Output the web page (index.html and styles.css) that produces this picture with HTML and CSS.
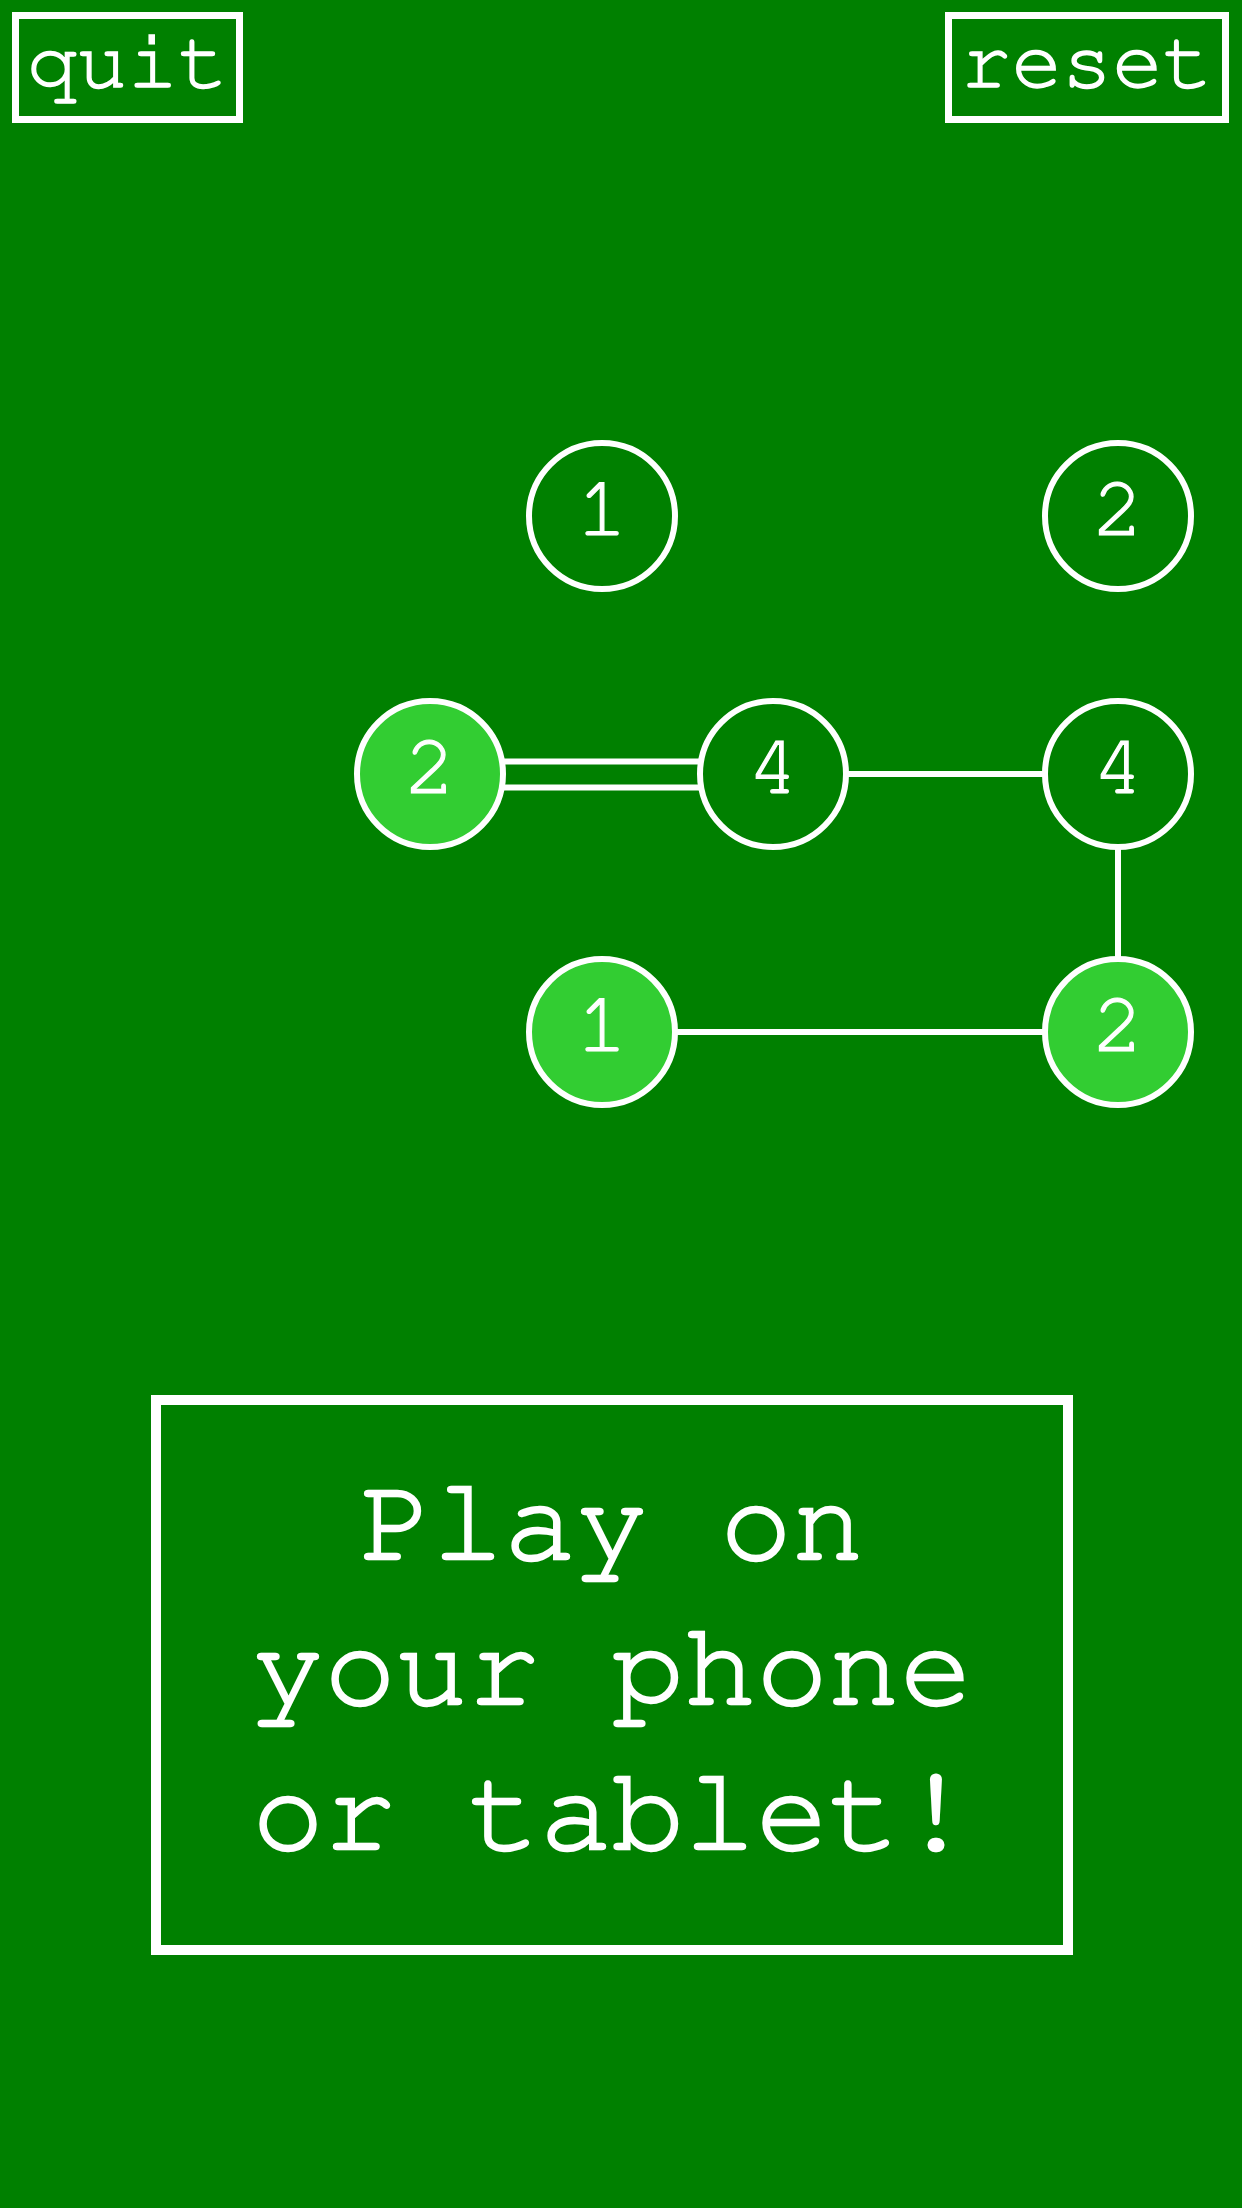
FILE: index.html
```html
<!DOCTYPE html>
<html>
<head>
<meta charset="utf-8">
<link rel="stylesheet" href="styles.css">
</head>
<body>
<div class="topbar">
  <div class="btn btn-quit">quit</div>
  <div class="btn btn-reset">reset</div>
</div>
<svg class="board" width="1242" height="710" viewBox="0 420 1242 710" xmlns="http://www.w3.org/2000/svg">
  <g stroke="#ffffff" stroke-width="6" fill="none">
    <line x1="430" y1="761.5" x2="773" y2="761.5"/>
    <line x1="430" y1="787.5" x2="773" y2="787.5"/>
    <line x1="773" y1="774" x2="1118" y2="774"/>
    <line x1="1118" y1="774" x2="1118" y2="1032"/>
    <line x1="602" y1="1032" x2="1118" y2="1032"/>
  </g>
  <g stroke="#ffffff" stroke-width="6">
    <circle cx="602" cy="516" r="73" fill="#008000"/>
    <circle cx="1118" cy="516" r="73" fill="#008000"/>
    <circle cx="430" cy="774" r="73" fill="#32cd32"/>
    <circle cx="773" cy="774" r="73" fill="#008000"/>
    <circle cx="1118" cy="774" r="73" fill="#008000"/>
    <circle cx="602" cy="1032" r="73" fill="#32cd32"/>
    <circle cx="1118" cy="1032" r="73" fill="#32cd32"/>
  </g>
  <g class="num" fill="#ffffff" text-anchor="middle">
    <text x="602" y="535">1</text>
    <text x="1118" y="535">2</text>
    <text x="430" y="793">2</text>
    <text x="773" y="793">4</text>
    <text x="1118" y="793">4</text>
    <text x="602" y="1051">1</text>
    <text x="1118" y="1051">2</text>
  </g>
</svg>
<div class="promo">
  <div class="promo-text">Play on<br>your phone<br>or tablet!</div>
</div>
</body>
</html>
```
FILE: styles.css
```css
html, body {
  margin: 0;
  padding: 0;
}
body {
  width: 1242px;
  height: 2208px;
  overflow: hidden;
  background: #008000;
  color: #ffffff;
  font-family: "Nimbus Mono PS", "FreeMono", "Courier 10 Pitch", "Liberation Mono", monospace;
}
.topbar {
  display: flex;
  justify-content: space-between;
  align-items: flex-start;
  padding: 12px 13px 0 12px;
}
.btn {
  box-sizing: border-box;
  height: 111px;
  border: 7px solid #ffffff;
  font-size: 84px;
  line-height: 87px;
  padding: 0 0 10px 0;
  text-align: center;
  white-space: nowrap;
  -webkit-text-stroke: 1.5px #ffffff;
}
.btn-quit {
  width: 231px;
}
.btn-reset {
  width: 284px;
}
.board {
  display: block;
  margin-top: 297px;
}
.num text {
  font-family: "Nimbus Mono PS", "FreeMono", "Courier 10 Pitch", "Liberation Mono", monospace;
  font-size: 86px;
  stroke: #ffffff;
  stroke-width: 1.2px;
}
.promo {
  box-sizing: border-box;
  width: 922px;
  height: 560px;
  margin: 265px 0 0 151px;
  border: 10px solid #ffffff;
  display: flex;
  align-items: center;
  justify-content: center;
}
.promo-text {
  font-size: 120px;
  line-height: 145px;
  text-align: center;
  white-space: nowrap;
  padding-bottom: 14px;
  -webkit-text-stroke: 2.5px #ffffff;
}
```
